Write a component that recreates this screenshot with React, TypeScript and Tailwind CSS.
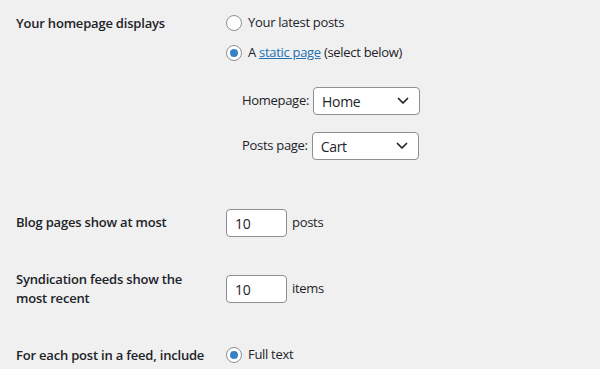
import React from 'react'

const Radio = ({ checked }: { checked?: boolean }) => (
    <span className="flex h-4 w-4 shrink-0 items-center justify-center rounded-full border border-[#8c8f94] bg-white">
        {checked && <span className="h-2 w-2 rounded-full bg-[#3582c4]" />}
    </span>
)

const Chevron = () => (
    <svg width="12" height="8" viewBox="0 0 12 8" className="shrink-0">
        <path d="M1.5 1.5 6 6l4.5-4.5" fill="none" stroke="#1d2327" strokeWidth="1.7" strokeLinecap="round" strokeLinejoin="round" />
    </svg>
)

const Select = ({ value }: { value: string }) => (
    <div className="flex h-[28px] w-[107px] items-center justify-between rounded-[4px] border border-[#8c8f94] bg-white pl-2 pr-2.5 text-[14px]">
        <span>{value}</span>
        <Chevron />
    </div>
)

const NumberBox = ({ value }: { value: string }) => (
    <div className="flex h-[28px] w-[61px] items-center rounded-[4px] border border-[#8c8f94] bg-white px-2 text-[14px]">
        {value}
    </div>
)

const App = () => {
    return (
        <div className="min-h-screen bg-[#f0f0f1] pl-4 pt-[13px] font-['Open_Sans',sans-serif] text-[13px] tracking-[-0.3px] text-[#1d2327]">
            {/* Your homepage displays */}
            <div className="grid grid-cols-[210px_1fr]">
                <div className="font-semibold leading-5 tracking-[-0.2px]">Your homepage displays</div>
                <div>
                    <div className="flex flex-col gap-2.5">
                        <label className="flex h-5 items-center gap-[6px]">
                            <Radio /> Your latest posts
                        </label>
                        <label className="flex h-5 items-center gap-[6px]">
                            <Radio checked />
                            <span>
                                A <a className="text-[#2271b1] underline">static page</a> (select below)
                            </span>
                        </label>
                    </div>
                    <div className="mt-6 flex flex-col gap-[17px] pl-4">
                        <div className="flex items-center gap-1">
                            <span>Homepage:</span>
                            <Select value="Home" />
                        </div>
                        <div className="flex items-center gap-1">
                            <span>Posts page:</span>
                            <Select value="Cart" />
                        </div>
                    </div>
                </div>
            </div>

            {/* Blog pages */}
            <div className="mt-[49px] grid grid-cols-[210px_1fr] items-center">
                <div className="font-semibold tracking-[-0.2px]">Blog pages show at most</div>
                <div className="flex items-center gap-[5px]">
                    <NumberBox value="10" /> posts
                </div>
            </div>

            {/* Syndication feeds */}
            <div className="mt-[33px] grid grid-cols-[210px_1fr] items-center">
                <div className="w-[190px] font-semibold leading-[19px] tracking-[-0.2px]">Syndication feeds show the most recent</div>
                <div className="flex items-center gap-[5px]">
                    <NumberBox value="10" /> items
                </div>
            </div>

            {/* Feed content */}
            <div className="mt-[37px] grid grid-cols-[210px_1fr] items-center">
                <div className="font-semibold leading-5 tracking-[-0.2px]">For each post in a feed, include</div>
                <label className="flex h-5 items-center gap-[6px]">
                    <Radio checked /> Full text
                </label>
            </div>
        </div>
    )
}

export default App
